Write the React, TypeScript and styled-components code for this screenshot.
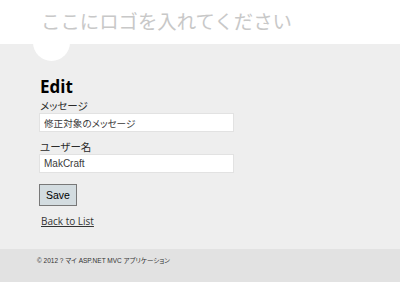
import React from "react";
import styled, { createGlobalStyle } from "styled-components";

const Global = createGlobalStyle`
  html, body { margin: 0; padding: 0; }
  body {
    background: #eeeeee;
    font-family: "Open Sans", "Noto Sans CJK JP", sans-serif;
    color: #333;
  }
`;

const Page = styled.div`
  display: flex;
  flex-direction: column;
  width: 400px;
  height: 282px;
  overflow: hidden;
  position: relative;
`;

const Header = styled.header`
  position: relative;
  z-index: 1;
  height: 44px;
  background: #ffffff;
  padding-left: 41px;
  box-sizing: border-box;
`;

const SiteTitle = styled.p`
  margin: 0;
  padding-top: 10px;
  font-family: "Noto Sans CJK JP", sans-serif;
  font-size: 19.4px;
  line-height: 22px;
  color: #c8c8c8;
`;

const Bubble = styled.div`
  position: absolute;
  left: 33px;
  top: 24px;
  width: 37px;
  height: 37px;
  border-radius: 50%;
  background: #ffffff;
`;

const Main = styled.main`
  flex: 1;
  background: #eeeeee;
  padding: 32px 0 0 39px;
  display: flex;
  flex-direction: column;
  align-items: flex-start;
`;

const Heading = styled.h2`
  margin: 0 0 0 1px;
  font-family: "Open Sans", sans-serif;
  font-weight: 700;
  font-size: 17px;
  line-height: 22px;
  color: #000;
`;

const Field = styled.div<{ $gap: number }>`
  display: flex;
  flex-direction: column;
  align-items: flex-start;
  margin-top: ${(p) => p.$gap}px;
`;

const Label = styled.label`
  margin-left: 1px;
  font-family: "Noto Sans CJK JP", sans-serif;
  font-feature-settings: "palt";
  font-size: 10.5px;
  line-height: 15px;
  color: #2a2a2a;
`;

const Input = styled.input<{ $size: number }>`
  box-sizing: border-box;
  width: 195px;
  height: 19px;
  margin: 0;
  padding: 0 4px;
  border: 1px solid #e2e2e2;
  background: #fff;
  font-family: "Liberation Sans", "Noto Sans CJK JP", sans-serif;
  font-feature-settings: "palt";
  font-size: ${(p) => p.$size}px;
  color: #3a3a3a;
  outline: none;
`;

const SaveButton = styled.button`
  box-sizing: border-box;
  margin-top: 11px;
  width: 38px;
  height: 22px;
  padding: 0;
  background: #d3dce0;
  border: 1px solid #787878;
  font-family: "Liberation Sans", sans-serif;
  font-size: 10.5px;
  color: #000;
`;

const BackLink = styled.a`
  margin: 8px 0 0 2px;
  font-family: "Open Sans", sans-serif;
  font-size: 10px;
  line-height: 14px;
  color: #333;
  text-decoration: underline;
`;

const Footer = styled.footer`
  height: 33px;
  background: #e2e2e2;
  padding: 7px 0 0 37px;
  box-sizing: border-box;
  font-family: "Liberation Sans", "Noto Sans CJK JP", sans-serif;
  font-feature-settings: "palt";
  font-size: 6.5px;
  line-height: 10px;
  color: #333;
`;

export default function App() {
  return (
    <Page>
      <Global />
      <Header>
        <SiteTitle>ここにロゴを入れてください</SiteTitle>
      </Header>
      <Main>
        <Heading>Edit</Heading>
        <Field $gap={0}>
          <Label>メッセージ</Label>
          <Input $size={9.6} defaultValue="修正対象のメッセージ" />
        </Field>
        <Field $gap={7}>
          <Label>ユーザー名</Label>
          <Input $size={10} defaultValue="MakCraft" />
        </Field>
        <SaveButton type="button">Save</SaveButton>
        <BackLink href="#">Back to List</BackLink>
      </Main>
      <Footer>© 2012 ? マイ ASP.NET MVC アプリケーション</Footer>
      <Bubble />
    </Page>
  );
}
